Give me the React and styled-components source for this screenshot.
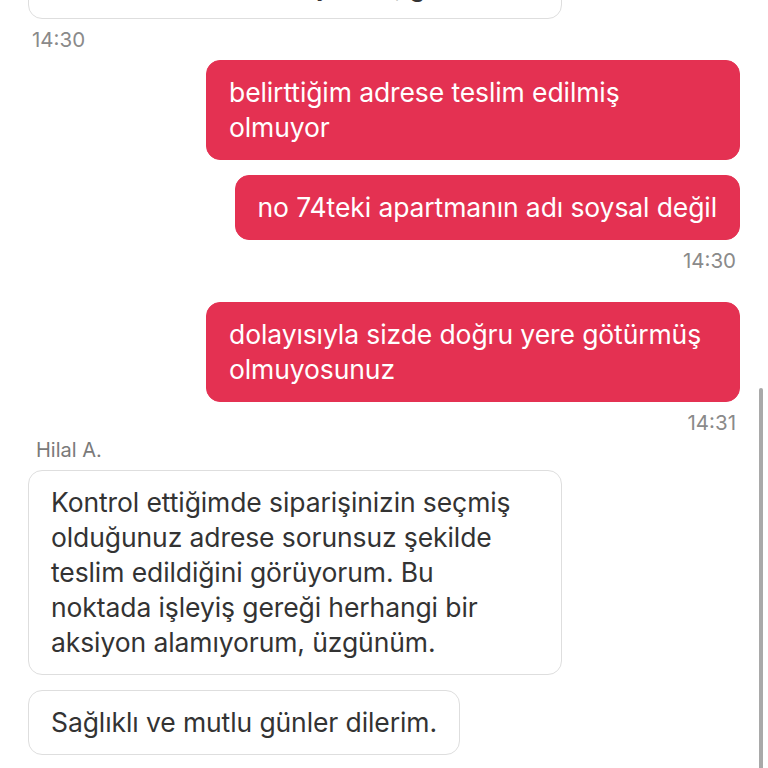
import React from "react";
import styled, { createGlobalStyle } from "styled-components";

const Global = createGlobalStyle`
  html, body { margin: 0; padding: 0; background: #fff; }
  body { font-family: Inter, "Noto Sans", sans-serif; -webkit-font-smoothing: antialiased; }
`;

const Screen = styled.div`
  position: relative;
  width: 768px;
  height: 768px;
  overflow: hidden;
  background: #fff;
`;

const Thread = styled.div`
  display: flex;
  flex-direction: column;
  padding: 0 28px;
`;

const Bubble = styled.div`
  box-sizing: border-box;
  max-width: 534px;
  padding: 14px 22px;
  border-radius: 14px;
  font-size: 26.5px;
  line-height: 35px;
  letter-spacing: -0.1px;
  align-self: ${(p) => (p.$mine ? "flex-end" : "flex-start")};
  background: ${(p) => (p.$mine ? "#e43152" : "#fff")};
  color: ${(p) => (p.$mine ? "#fff" : "#333")};
  border: 1px solid ${(p) => (p.$mine ? "#e43152" : "#dedede")};
  margin-top: ${(p) => p.$mt ?? 0}px;
`;

const Time = styled.div`
  font-size: 20.5px;
  line-height: 24px;
  color: #8a8a8a;
  padding: 0 4px;
  align-self: ${(p) => (p.$mine ? "flex-end" : "flex-start")};
  margin-top: ${(p) => p.$mt ?? 0}px;
`;

const Sender = styled.div`
  font-size: 20px;
  line-height: 24px;
  color: #7a7a7a;
  padding: 0 8px;
  margin-top: ${(p) => p.$mt ?? 0}px;
`;

const ScrollThumb = styled.div`
  position: absolute;
  right: 5px;
  top: 388px;
  width: 4px;
  height: 400px;
  border-radius: 2px;
  background: #a9a9a9;
`;

export default function App() {
  return (
    <Screen>
      <Global />
      <Thread>
        <Bubble $mt={-81}>Merhaba, siparişinizin teslimat durumunu kontrol ediyorum, gerekli</Bubble>
        <Time $mt={9}>14:30</Time>
        <Bubble $mine $mt={8}>belirttiğim adrese teslim edilmiş olmuyor</Bubble>
        <Bubble $mine $mt={15}>no 74teki apartmanın adı soysal değil</Bubble>
        <Time $mine $mt={9}>14:30</Time>
        <Bubble $mine $mt={29}>dolayısıyla sizde doğru yere götürmüş olmuyosunuz</Bubble>
        <Time $mine $mt={9}>14:31</Time>
        <Sender $mt={3}>Hilal A.</Sender>
        <Bubble $mt={8}>
          Kontrol ettiğimde siparişinizin seçmiş olduğunuz adrese sorunsuz şekilde teslim edildiğini görüyorum. Bu noktada işleyiş gereği herhangi bir aksiyon alamıyorum, üzgünüm.
        </Bubble>
        <Bubble $mt={15}>Sağlıklı ve mutlu günler dilerim.</Bubble>
      </Thread>
      <ScrollThumb />
    </Screen>
  );
}
